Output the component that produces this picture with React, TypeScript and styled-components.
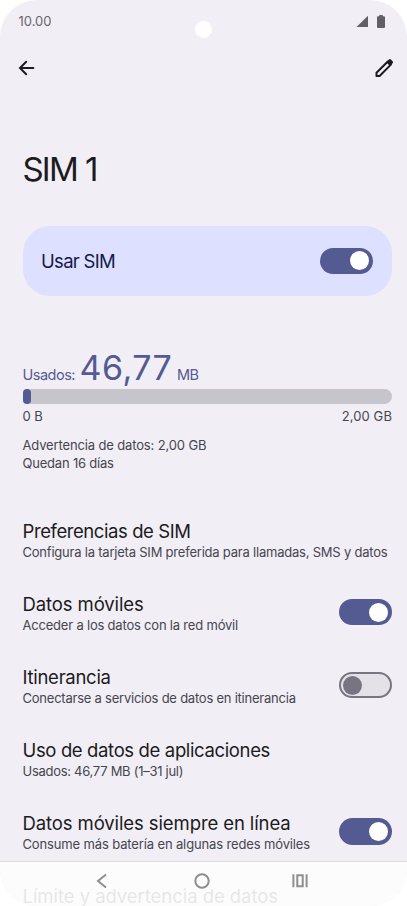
import React from "react";
import styled, { createGlobalStyle } from "styled-components";

const GlobalStyle = createGlobalStyle`
  * { box-sizing: border-box; }
  body { margin: 0; background: #fff; }
`;

const Screen = styled.div`
  position: relative;
  width: 407px;
  height: 906px;
  overflow: hidden;
  border-radius: 37px;
  background: #f1eef6;
  color: #1b1b20;
  font-family: Inter, "Liberation Sans", sans-serif;
`;

const StatusBar = styled.header`
  height: 42px;
  padding: 0 22px 0 18.5px;
  display: flex;
  align-items: center;
  justify-content: space-between;
`;

const Text = styled.span<{ $size: number; $line: number; $track?: number; $color?: string }>`
  display: block;
  margin: 0;
  white-space: nowrap;
  font-size: ${(p) => p.$size}px;
  line-height: ${(p) => p.$line}px;
  letter-spacing: ${(p) => p.$track ?? 0}px;
  font-weight: 400;
  color: ${(p) => p.$color ?? "inherit"};
`;

const PageTitle = styled(Text)`
  word-spacing: 0.5px;
`;

const StatusIcons = styled.div`
  display: flex;
  gap: 9px;
`;

const Camera = styled.div`
  position: absolute;
  left: 195px;
  top: 21px;
  width: 17px;
  height: 17px;
  border-radius: 50%;
  background: #fff;
`;

const AppBar = styled.nav`
  height: 52px;
  padding: 0 12px 0 15px;
  display: flex;
  align-items: center;
  justify-content: space-between;
`;

const IconButton = styled.button`
  display: flex;
  padding: 0;
  border: 0;
  background: none;
  color: #1b1b20;
`;

const Main = styled.main`
  padding: 55px 15px 0 22.5px;
`;

const UseCard = styled.section`
  height: 70.5px;
  margin-top: 36.5px;
  padding: 0 19px 0 18.5px;
  border-radius: 27px;
  background: #dde0ff;
  display: flex;
  align-items: center;
  justify-content: space-between;
`;

const Track = styled.span<{ $on: boolean }>`
  flex: none;
  width: 53px;
  height: 26.5px;
  padding: 0 ${(p) => (p.$on ? "4px" : "2px")};
  border-radius: 14px;
  border: ${(p) => (p.$on ? "0" : "2px solid #777680")};
  background: ${(p) => (p.$on ? "#545a92" : "#e4e1e9")};
  display: flex;
  align-items: center;
  justify-content: ${(p) => (p.$on ? "flex-end" : "flex-start")};
`;

const Thumb = styled.span<{ $on: boolean }>`
  width: 19px;
  height: 19px;
  border-radius: 50%;
  background: ${(p) => (p.$on ? "#fff" : "#777680")};
`;

const Usage = styled.section`
  margin-top: 51.5px;
  height: 171px;
`;

const UsageTotal = styled.div`
  display: flex;
  align-items: baseline;
  gap: 4.5px;
  height: 41px;
  color: #545a92;
`;

const Meter = styled.div`
  height: 15px;
  border-radius: 8px;
  background: #c6c5cb;
`;

const MeterFill = styled.div`
  width: 8px;
  height: 15px;
  border-radius: 4px;
  background: #545a92;
`;

const Scale = styled.div`
  display: flex;
  justify-content: space-between;
  margin: 3.5px 0 11px;
`;

const Preference = styled.section`
  height: 73.12px;
  display: flex;
  align-items: flex-start;
  justify-content: space-between;
`;

const SwitchSlot = styled.div`
  display: flex;
  padding-top: 7.25px;
`;

const NavBar = styled.footer`
  position: absolute;
  left: 0;
  right: 0;
  bottom: 0;
  height: 45px;
  border-top: 1px solid #dddbe1;
  background: rgba(253, 253, 253, 0.9);
  display: grid;
  grid-template-columns: 52px repeat(3, 99px);
  align-items: start;
  justify-items: center;
`;

const NavIcon = styled.svg`
  margin-top: 10px;
  width: 20px;
  height: 18px;
  fill: none;
  stroke: #8e8e90;
  stroke-width: 2;
`;

function Switch({ on }: { on: boolean }) {
  return (
    <Track $on={on} role="switch" aria-checked={on}>
      <Thumb $on={on} />
    </Track>
  );
}

interface Item {
  title: string;
  titleTrack: number;
  note?: string;
  noteTrack?: number;
  on?: boolean;
}

const items: Item[] = [
  { title: "Preferencias de SIM", titleTrack: -0.42, note: "Configura la tarjeta SIM preferida para llamadas, SMS y datos", noteTrack: -0.215 },
  { title: "Datos móviles", titleTrack: -0.1, note: "Acceder a los datos con la red móvil", noteTrack: -0.2, on: true },
  { title: "Itinerancia", titleTrack: -0.27, note: "Conectarse a servicios de datos en itinerancia", noteTrack: -0.23, on: false },
  { title: "Uso de datos de aplicaciones", titleTrack: -0.36, note: "Usados: 46,77 MB (1–31 jul)", noteTrack: -0.28 },
  { title: "Datos móviles siempre en línea", titleTrack: -0.1, note: "Consume más batería en algunas redes móviles", noteTrack: -0.135, on: true },
  { title: "Límite y advertencia de datos", titleTrack: -0.05 },
];

export default function App() {
  return (
    <>
      <GlobalStyle />
      <Screen>
        <StatusBar>
          <Text $size={13} $line={20} $color="#69676d">10.00</Text>
          <StatusIcons>
            <svg width="12" height="13" viewBox="0 0 12 13"><path d="M12 0.700V12H0.500Z" fill="#626064" /></svg>
            <svg width="8" height="13" viewBox="0 0 8 13"><path d="M2.300 0h3.400v1.200H7q1 0 1 1V12q0 1-1 1H1q-1 0-1-1V2.200q0-1 1-1h1.300Z" fill="#626064" /></svg>
          </StatusIcons>
        </StatusBar>
        <Camera />
        <AppBar>
          <IconButton aria-label="Atrás">
            <svg width="22" height="22" viewBox="0 0 22 22" fill="none" stroke="currentColor" strokeWidth="2" strokeLinecap="round">
              <path d="M18.300 11H5M11.200 4.700 5 11l6.200 6.300" />
            </svg>
          </IconButton>
          <IconButton aria-label="Editar">
            <svg width="22" height="22" viewBox="0 0 22 22" fill="none" stroke="currentColor">
              <path d="M3.500 19v-3.200L14.800 4.500l3.100 3.100L6.600 19Z" strokeWidth="2" strokeLinejoin="round" />
              <path d="M13.300 5.200 15.900 2.600q1-1 2 0l1.700 1.700q1 1 0 2L16.900 8.900Z" fill="currentColor" stroke="none" />
            </svg>
          </IconButton>
        </AppBar>
        <Main>
          <PageTitle as="h1" $size={33} $line={40} $track={-1.8}>SIM 1</PageTitle>
          <UseCard>
            <Text $size={18.5} $line={24} $track={-0.7} $color="#151a4b">Usar SIM</Text>
            <Switch on />
          </UseCard>
          <Usage>
            <UsageTotal>
              <Text $size={14.5} $line={40} $track={-0.5}>Usados:</Text>
              <Text as="strong" $size={34} $line={40} $track={0.5}>46,77</Text>
              <Text $size={14.5} $line={40} $track={-0.5}>MB</Text>
            </UsageTotal>
            <Meter><MeterFill /></Meter>
            <Scale>
              <Text $size={13} $line={18} $track={-0.1} $color="#46464f">0 B</Text>
              <Text $size={13} $line={18} $track={0.1} $color="#46464f">2,00 GB</Text>
            </Scale>
            <Text $size={13} $line={18} $track={-0.14} $color="#46464f">Advertencia de datos: 2,00 GB</Text>
            <Text $size={13} $line={18} $track={-0.2} $color="#46464f">Quedan 16 días</Text>
          </Usage>
          {items.map((item) => (
            <Preference key={item.title}>
              <div>
                <Text $size={18.5} $line={24} $track={item.titleTrack}>{item.title}</Text>
                {item.note && <Text $size={13} $line={18} $track={item.noteTrack} $color="#46464f">{item.note}</Text>}
              </div>
              {item.on !== undefined && <SwitchSlot><Switch on={item.on} /></SwitchSlot>}
            </Preference>
          ))}
        </Main>
        <NavBar>
          <span />
          <NavIcon viewBox="0 0 20 18"><path d="M14 2.500 6 9l8 6.500" /></NavIcon>
          <NavIcon viewBox="0 0 20 18"><circle cx="11" cy="9" r="6.700" /></NavIcon>
          <NavIcon viewBox="0 0 20 18"><path d="M3.400 2.200v13M16.600 2.200v13M7.300 3.200h5.400v11H7.300Z" /></NavIcon>
        </NavBar>
      </Screen>
    </>
  );
}
